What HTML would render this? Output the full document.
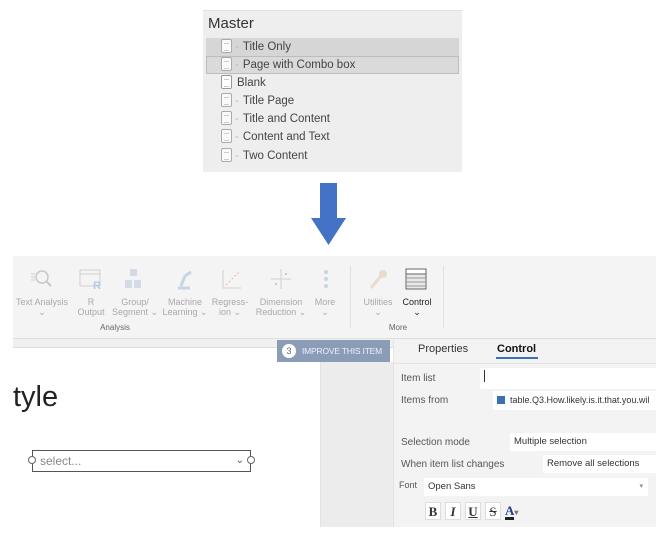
<!DOCTYPE html>
<html><head><meta charset="utf-8"><style>
*{margin:0;padding:0;box-sizing:border-box}
body{width:656px;height:534px;background:#fff;position:relative;overflow:hidden;font-family:"Liberation Sans",sans-serif}
.a{position:absolute}
.li{position:absolute;left:221px;font-size:11.5px;color:#444;height:18px;line-height:18px}
.doc{display:inline-block;width:11px;height:14px;border:1px solid #aaa;border-radius:2px;background:#fafafa;vertical-align:-3px;margin-right:3px;position:relative}
.doc:after{content:"";position:absolute;left:2px;top:3px;width:5px;height:6px;border-top:1px solid #ccc;border-bottom:1px solid #ccc}
.dash{color:#bbb;margin-right:4px}
.t{position:absolute;font-size:9px;color:#a9a9a9;text-align:center;line-height:10px}
.ic{position:absolute;top:268px;width:22px;height:22px}
.lab{position:absolute;font-size:10px;color:#555;white-space:nowrap}
.fld{position:absolute;background:#fff;font-size:9.5px;color:#333;padding-left:4px;line-height:19px;white-space:nowrap;overflow:hidden}
.btn{position:absolute;top:502px;width:16px;height:18px;background:#fff;border:1px solid #ddd;font-family:"Liberation Serif",serif;font-size:13px;text-align:center;line-height:17px;color:#333;font-weight:bold}
</style></head><body>
<div class="a" style="left:203px;top:10px;width:259px;height:162px;background:#eeeeee;border-top:1px solid #e0e0e0"></div>
<div class="a" style="left:208px;top:15px;font-size:15px;color:#333">Master</div>
<div class="a" style="left:206px;top:38px;width:253px;height:18px;background:#d6d6d6"></div>
<div class="a" style="left:206px;top:56px;width:253px;height:18px;background:#dadada;border:1px solid #bdbdbd"></div>
<div class="li" style="top:38px"><span class="doc"></span><span class="dash">-</span>Title Only</div>
<div class="li" style="top:56px"><span class="doc"></span><span class="dash">-</span>Page with Combo box</div>
<div class="li" style="top:74px"><span class="doc" style="border-color:#999;background:#fff;margin-right:5px"></span>Blank</div>
<div class="li" style="top:92px"><span class="doc"></span><span class="dash">-</span>Title Page</div>
<div class="li" style="top:110px"><span class="doc"></span><span class="dash">-</span>Title and Content</div>
<div class="li" style="top:128px"><span class="doc"></span><span class="dash">-</span>Content and Text</div>
<div class="li" style="top:147px"><span class="doc"></span><span class="dash">-</span>Two Content</div>
<svg class="a" style="left:305px;top:183px" width="42" height="63"><polygon points="15,0 32,0 32,35 41,35 23.5,62 6,35 15,35" fill="#4472c4"/></svg>
<div class="a" style="left:13px;top:256px;width:643px;height:82px;background:#f4f4f4"></div>
<div class="a" style="left:13px;top:338px;width:643px;height:10px;background:#f0f0f0;border-top:1px solid #dedede;border-bottom:1px solid #dedede"></div>
<div class="a" style="left:350px;top:266px;width:1px;height:62px;background:#e0e0e0"></div>
<div class="a" style="left:443px;top:266px;width:1px;height:62px;background:#e0e0e0"></div>
<svg class="ic" style="left:30px" viewBox="0 0 22 22"><circle cx="12" cy="9" r="6" fill="none" stroke="#c8c8c8" stroke-width="1.5"/><line x1="16" y1="13" x2="21" y2="18" stroke="#c8c8c8" stroke-width="2"/><path d="M1 6h4M1 9h4M1 12h4" stroke="#d0d0d0"/></svg>
<svg class="ic" style="left:79px" viewBox="0 0 22 22"><rect x="1" y="2" width="20" height="16" fill="none" stroke="#d0d0d0"/><path d="M1 6h20" stroke="#d0d0d0"/><text x="14" y="21" font-size="11" fill="#b8c8e0" font-weight="bold" font-family="Liberation Sans">R</text></svg>
<svg class="ic" style="left:122px" viewBox="0 0 22 22"><rect x="8" y="1" width="7" height="7" fill="#d4dbe6"/><rect x="3" y="12" width="7" height="8" fill="#d4dbe6"/><rect x="12" y="12" width="7" height="8" fill="#d4dbe6"/></svg>
<svg class="ic" style="left:174px" viewBox="0 0 22 22"><path d="M4 20h12M7 18l4-10 6-4" stroke="#c8d4e4" stroke-width="3" fill="none"/></svg>
<svg class="ic" style="left:221px" viewBox="0 0 22 22"><path d="M2 2v18h18" stroke="#d0d0d0" fill="none"/><path d="M5 17l13-13" stroke="#e8c0b0" stroke-dasharray="2 2"/></svg>
<svg class="ic" style="left:270px" viewBox="0 0 22 22"><path d="M11 1v20M1 11h20" stroke="#d0d0d0"/><circle cx="6" cy="16" r="1" fill="#bbb"/><circle cx="16" cy="6" r="1" fill="#bbb"/></svg>
<svg class="ic" style="left:315px" viewBox="0 0 22 22"><circle cx="11" cy="4" r="2" fill="#c8d4e4"/><circle cx="11" cy="11" r="2" fill="#c8d4e4"/><circle cx="11" cy="18" r="2" fill="#c8d4e4"/></svg>
<svg class="ic" style="left:367px" viewBox="0 0 22 22"><path d="M4 20l10-12" stroke="#e8dccc" stroke-width="3"/><circle cx="16" cy="6" r="4" fill="#e8dccc"/></svg>
<svg class="ic" style="left:405px" viewBox="0 0 22 22"><rect x="1" y="1" width="20" height="20" fill="#e8e8e8" stroke="#666"/><rect x="1" y="1" width="20" height="5" fill="#fff" stroke="#666"/><path d="M1 10h20M1 14h20M1 18h20" stroke="#999"/></svg>
<div class="t" style="left:14px;top:297px;width:56px">Text Analysis<br>⌄</div>
<div class="t" style="left:75px;top:297px;width:32px">R<br>Output</div>
<div class="t" style="left:111px;top:297px;width:48px">Group/<br>Segment ⌄</div>
<div class="t" style="left:162px;top:297px;width:46px">Machine<br>Learning ⌄</div>
<div class="t" style="left:210px;top:297px;width:40px">Regress-<br>ion ⌄</div>
<div class="t" style="left:255px;top:297px;width:52px">Dimension<br>Reduction ⌄</div>
<div class="t" style="left:310px;top:297px;width:30px">More<br>⌄</div>
<div class="t" style="left:360px;top:297px;width:36px">Utilities<br>⌄</div>
<div class="t" style="left:398px;top:297px;width:38px;color:#222">Control<br>⌄</div>
<div class="t" style="left:90px;top:323px;width:50px;color:#666;font-size:8px">Analysis</div>
<div class="t" style="left:380px;top:323px;width:36px;color:#666;font-size:8px">More</div>
<div class="a" style="left:277px;top:340px;width:113px;height:22px;background:#8b9db6"></div>
<div class="a" style="left:282px;top:344px;width:14px;height:14px;border-radius:50%;background:#fff;font-size:9px;color:#667;text-align:center;line-height:14px">3</div>
<div class="a" style="left:302px;top:346px;font-size:8.5px;color:#eef;letter-spacing:-0.2px">IMPROVE THIS ITEM</div>
<div class="a" style="left:320px;top:362px;width:74px;height:165px;background:#ececec;border-left:1px solid #e2e2e2"></div>
<div class="a" style="left:393px;top:340px;width:263px;height:187px;background:#f3f3f3;border-left:1px solid #e4e4e4"></div>
<div class="a" style="left:418px;top:343px;font-size:11px;color:#333">Properties</div>
<div class="a" style="left:497px;top:343px;font-size:11px;color:#111;font-weight:bold">Control</div>
<div class="a" style="left:496px;top:357px;width:42px;height:2px;background:#3a70b8"></div>
<div class="a" style="left:393px;top:363px;width:263px;height:1px;background:#e2e2e2"></div>
<div class="lab" style="left:401px;top:373px">Item list</div>
<div class="fld" style="left:480px;top:368px;width:176px;height:21px"><span style="display:inline-block;width:1px;height:12px;background:#333;vertical-align:-2px"></span></div>
<div class="lab" style="left:401px;top:395px">Items from</div>
<div class="fld" style="left:493px;top:391px;width:163px;height:19px;font-size:9px"><span style="display:inline-block;width:8px;height:8px;background:#3a6fb0;vertical-align:-1px;margin-right:5px"></span>table.Q3.How.likely.is.it.that.you.wil</div>
<div class="lab" style="left:401px;top:437px">Selection mode</div>
<div class="fld" style="left:510px;top:433px;width:146px;height:18px;line-height:18px">Multiple selection</div>
<div class="lab" style="left:401px;top:459px">When item list changes</div>
<div class="fld" style="left:543px;top:455px;width:113px;height:18px;line-height:18px">Remove all selections</div>
<div class="lab" style="left:399px;top:480px;font-size:9px">Font</div>
<div class="fld" style="left:424px;top:478px;width:224px;height:18px;line-height:18px">Open Sans<span style="position:absolute;right:5px;color:#888;font-size:7px">▾</span></div>
<div class="btn" style="left:425px">B</div>
<div class="btn" style="left:445px;font-style:italic">I</div>
<div class="btn" style="left:465px;text-decoration:underline">U</div>
<div class="btn" style="left:485px;text-decoration:line-through;font-weight:normal">S</div>
<div class="btn" style="left:505px;width:26px;border:none;background:none;text-align:left"><span style="border-bottom:3px solid #222;line-height:13px;display:inline-block;color:#1f3d8a">A</span><span style="font-size:8px;color:#777">▾</span></div>
<div class="a" style="left:13px;top:381px;font-size:29px;color:#222">tyle</div>
<div class="a" style="left:32px;top:450px;width:219px;height:22px;border:1px solid #555;background:#fff;font-size:12px;color:#888;padding-left:7px;line-height:20px">select...<span style="position:absolute;right:6px;top:0;color:#555;font-size:10px">⌄</span></div>
<div class="a" style="left:28px;top:456px;width:8px;height:8px;border:1px solid #666;border-radius:50%;background:#fff"></div>
<div class="a" style="left:247px;top:456px;width:8px;height:8px;border:1px solid #666;border-radius:50%;background:#fff"></div>
</body></html>
